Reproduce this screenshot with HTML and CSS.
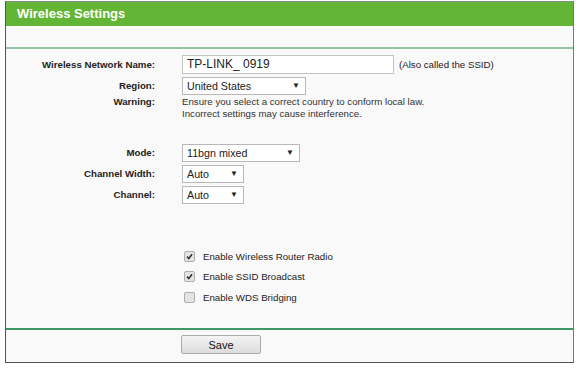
FILE: index.html
```html
<!DOCTYPE html>
<html lang="en">
<head>
  <meta charset="UTF-8">
  <title>Wireless Settings</title>
  <link rel="stylesheet" href="styles.css">
</head>
<body>
  <div class="panel">
    <div class="panel-title">Wireless Settings</div>
    <div class="spacer"></div>
    <div class="form">
      <div class="row">
        <div class="label">Wireless Network Name:</div>
        <div class="field">
          <div class="textbox ssid">TP-LINK_ 0919</div>
          <span class="hint">(Also called the SSID)</span>
        </div>
      </div>
      <div class="row">
        <div class="label">Region:</div>
        <div class="field">
          <div class="select region">United States<span class="arrow">&#9660;</span></div>
        </div>
      </div>
      <div class="row warn">
        <div class="label">Warning:</div>
        <div class="note">Ensure you select a correct country to conform local law.<br>Incorrect settings may cause interference.</div>
      </div>

      <div class="row gap-top">
        <div class="label">Mode:</div>
        <div class="field">
          <div class="select mode">11bgn mixed<span class="arrow">&#9660;</span></div>
        </div>
      </div>
      <div class="row">
        <div class="label">Channel Width:</div>
        <div class="field">
          <div class="select small">Auto<span class="arrow">&#9660;</span></div>
        </div>
      </div>
      <div class="row">
        <div class="label">Channel:</div>
        <div class="field">
          <div class="select small">Auto<span class="arrow">&#9660;</span></div>
        </div>
      </div>

      <div class="row check-row check-first">
        <div class="label"></div>
        <div class="field">
          <span class="check on"><svg width="7" height="7" viewBox="0 0 7 7"><path d="M1 3.6 L2.8 5.6 L6 1.2" fill="none" stroke="#333" stroke-width="1.6"/></svg></span>
          <span class="check-text">Enable Wireless Router Radio</span>
        </div>
      </div>
      <div class="row check-row">
        <div class="label"></div>
        <div class="field">
          <span class="check on"><svg width="7" height="7" viewBox="0 0 7 7"><path d="M1 3.6 L2.8 5.6 L6 1.2" fill="none" stroke="#333" stroke-width="1.6"/></svg></span>
          <span class="check-text">Enable SSID Broadcast</span>
        </div>
      </div>
      <div class="row check-row">
        <div class="label"></div>
        <div class="field">
          <span class="check"></span>
          <span class="check-text">Enable WDS Bridging</span>
        </div>
      </div>
    </div>
    <div class="actions">
      <button class="btn">Save</button>
    </div>
  </div>
</body>
</html>
```

FILE: styles.css
```css
body {
  margin: 0;
  background: #fff;
  font-family: "Liberation Sans", Arial, sans-serif;
  color: #222;
}
.panel {
  width: 567px;
  margin: 1px 0 0 5px;
  border: 1px solid #555;
  border-top-color: #888;
  border-right-color: #777;
  background: #f9f9f9;
}
.panel-title {
  height: 24px;
  line-height: 24px;
  padding-left: 11px;
  background: #63b535;
  color: #fff;
  font-size: 13px;
  font-weight: bold;
}
.spacer {
  height: 21px;
  border-bottom: 2px solid #93c3a5;
}
.form {
  padding: 5px 0 20px;
  border-bottom: 2px solid #3d9a62;
}
.row {
  display: flex;
  align-items: center;
  height: 21px;
}
.label {
  width: 149px;
  margin-right: 27px;
  text-align: right;
  font-size: 9.7px;
  font-weight: bold;
}
.field {
  display: flex;
  align-items: center;
}
.textbox, .select {
  box-sizing: border-box;
  background: #fff;
  border: 1px solid #c4c4c4;
  font-size: 10.7px;
  color: #222;
  padding-left: 4px;
}
.textbox {
  height: 19px;
  line-height: 17px;
  font-size: 12px;
}
.ssid {
  width: 212px;
}
.hint {
  margin-left: 5px;
  font-size: 9.7px;
}
.select {
  position: relative;
  height: 18px;
  line-height: 16px;
  border-color: #b8b8b8;
}
.arrow {
  position: absolute;
  right: 5px;
  top: 0;
  font-size: 8px;
  color: #222;
}
.region {
  width: 124px;
}
.mode {
  width: 118px;
}
.small {
  width: 62px;
}
.warn {
  height: 24px;
  align-items: flex-start;
}
.warn .label {
  line-height: 12px;
}
.note {
  font-size: 9.7px;
  line-height: 12px;
  color: #333;
}
.gap-top {
  margin-top: 22px;
}
.check-row {
  height: 20.5px;
}
.check-first {
  margin-top: 41px;
}
.check {
  box-sizing: border-box;
  width: 11px;
  height: 11px;
  margin-left: 2px;
  border: 1px solid #adadad;
  border-radius: 2px;
  background: #e4e4e4;
  display: flex;
  align-items: center;
  justify-content: center;
}
.check-text {
  margin-left: 8px;
  font-size: 9.7px;
}
.actions {
  height: 27px;
  padding: 5px 0 0 175px;
}
.btn {
  width: 80px;
  height: 19px;
  padding: 0;
  border: 1px solid #aaa;
  border-radius: 2px;
  background: linear-gradient(#f4f4f4, #dcdcdc);
  font-family: "Liberation Sans", Arial, sans-serif;
  font-size: 11px;
  color: #111;
}
```
